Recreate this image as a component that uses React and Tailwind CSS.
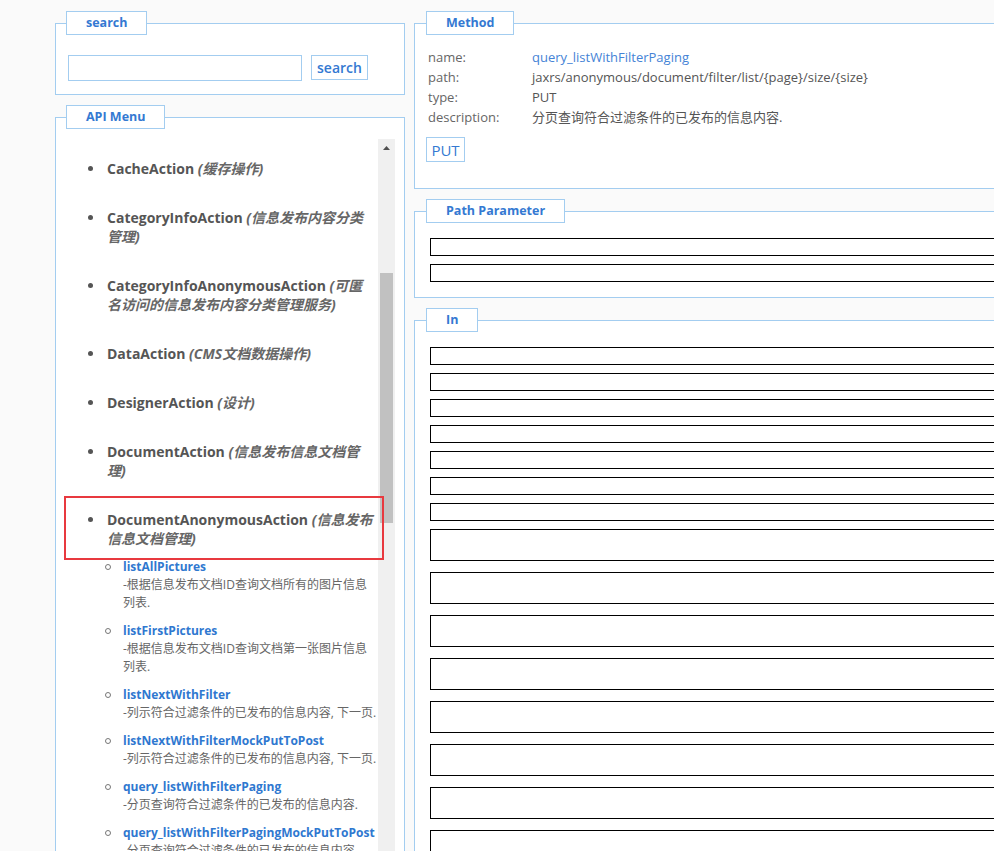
import React from 'react';

const actions = [
  { name: 'CacheAction', desc: '缓存操作' },
  { name: 'CategoryInfoAction', desc: '信息发布内容分类管理' },
  { name: 'CategoryInfoAnonymousAction', desc: '可匿名访问的信息发布内容分类管理服务' },
  { name: 'DataAction', desc: 'CMS文档数据操作' },
  { name: 'DesignerAction', desc: '设计' },
  { name: 'DocumentAction', desc: '信息发布信息文档管理' },
  {
    name: 'DocumentAnonymousAction',
    desc: '信息发布信息文档管理',
    methods: [
      { name: 'listAllPictures', desc: '-根据信息发布文档ID查询文档所有的图片信息列表.' },
      { name: 'listFirstPictures', desc: '-根据信息发布文档ID查询文档第一张图片信息列表.' },
      { name: 'listNextWithFilter', desc: '-列示符合过滤条件的已发布的信息内容, 下一页.' },
      { name: 'listNextWithFilterMockPutToPost', desc: '-列示符合过滤条件的已发布的信息内容, 下一页.' },
      { name: 'query_listWithFilterPaging', desc: '-分页查询符合过滤条件的已发布的信息内容.' },
      { name: 'query_listWithFilterPagingMockPutToPost', desc: '-分页查询符合过滤条件的已发布的信息内容.' },
    ],
  },
];

const methodInfo = [
  { label: 'name:', value: 'query_listWithFilterPaging', link: true },
  { label: 'path:', value: 'jaxrs/anonymous/document/filter/list/{page}/size/{size}' },
  { label: 'type:', value: 'PUT' },
  { label: 'description:', value: '分页查询符合过滤条件的已发布的信息内容.' },
];

const Legend = ({ children, ml = 'ml-[10px]' }) => (
  <legend className={`${ml} h-[24px] border border-[#a3cdf0] bg-white px-[19px] text-[12.5px] font-bold leading-[22px] text-[#3479d2]`}>
    {children}
  </legend>
);

const Box = ({ tall }) => (
  <div className={`border border-black ${tall ? 'h-[32px] mb-[11px]' : 'h-[18px] mb-[8px]'}`}></div>
);

const App = () => {
  return (
    <div
      className="h-[851px] w-[994px] overflow-hidden bg-[#fafafa]"
      style={{ fontFamily: '"Open Sans", "Noto Sans CJK SC", sans-serif' }}
    >
      <div className="flex items-start gap-[9px] pl-[55px] pt-[11px]">
        {/* left column */}
        <div className="flex w-[350px] min-w-0 shrink-0 flex-col gap-[10px]">
          <fieldset className="min-w-0 border border-[#a3cdf0] bg-white">
            <Legend>search</Legend>
            <div className="flex items-start gap-[9px] pl-[12px] pt-[20px] pb-[13px]">
              <input className="h-[26px] w-[234px] border border-[#a3cdf0] bg-white outline-none" />
              <button className="h-[25px] w-[57px] border border-[#a3cdf0] bg-white text-[14px] font-semibold leading-[22px] text-[#3479d2]">
                search
              </button>
            </div>
          </fieldset>

          <fieldset className="h-[760px] min-w-0 border border-[#a3cdf0] bg-white">
            <Legend>API Menu</Legend>
            <div className="relative mt-[10px] flex h-[720px] pr-[9px]">
              <div className="w-0 min-w-0 flex-1 overflow-hidden pt-[20px]">
                {actions.map(action => (
                  <div key={action.name} className="mb-[30px]">
                    <div className="flex pr-[4px]">
                      <div className="flex h-[19px] w-[51px] shrink-0 items-center justify-end pr-[14px]">
                        <span className="h-[5px] w-[5px] rounded-full bg-[#555]"></span>
                      </div>
                      <p className="min-w-0 text-[14px] font-bold leading-[19px] text-[#555]">
                        {action.name} <i className="text-[#666]">({action.desc})</i>
                      </p>
                    </div>
                    {action.methods && (
                      <div className="mt-[10px] flex flex-col gap-[10px]">
                        {action.methods.map(m => (
                          <div key={m.name} className="flex">
                            <div className="flex h-[18px] w-[67px] shrink-0 items-center justify-end pr-[12px]">
                              <span className="h-[6px] w-[6px] rounded-full border border-[#777]"></span>
                            </div>
                            <div className="min-w-0">
                              <p className="whitespace-nowrap text-[12px] font-bold leading-[18px] text-[#2f78d0]">{m.name}</p>
                              <p className="text-[12px] leading-[18px] text-[#666]">{m.desc}</p>
                            </div>
                          </div>
                        ))}
                      </div>
                    )}
                  </div>
                ))}
              </div>

              {/* scrollbar */}
              <div className="flex w-[17px] shrink-0 flex-col bg-[#f0f0f0]">
                <div className="flex h-[17px] items-center justify-center">
                  <svg width="7" height="4" viewBox="0 0 7 4">
                    <path d="M0 4 L3.5 0 L7 4 Z" fill="#505050" />
                  </svg>
                </div>
                <div className="mx-[2px] mt-[117px] h-[250px] bg-[#c1c1c1]"></div>
              </div>

              {/* highlight */}
              <div className="absolute left-[8px] top-[357px] h-[64px] w-[320px] border-2 border-[#e8393f]"></div>
            </div>
          </fieldset>
        </div>

        {/* right column */}
        <div className="flex w-[640px] shrink-0 flex-col gap-[10px]">
          <fieldset className="min-w-0 border border-[#a3cdf0] bg-white">
            <Legend ml="ml-[11px]">Method</Legend>
            <div className="pl-[13px] pt-[12px] pb-[26px]">
              {methodInfo.map(row => (
                <div key={row.label} className="flex text-[13px] leading-[20px]">
                  <span className="w-[104px] shrink-0 text-[#666]">{row.label}</span>
                  <span className={row.link ? 'text-[#4583d6]' : 'text-[#555]'}>{row.value}</span>
                </div>
              ))}
              <button className="-ml-[2px] mt-[10px] h-[25px] w-[39px] border border-[#a3cdf0] bg-white text-[15px] leading-[22px] text-[#3479d2]">
                PUT
              </button>
            </div>
          </fieldset>

          <fieldset className="min-w-0 border border-[#a3cdf0] bg-white">
            <Legend ml="ml-[11px]">Path Parameter</Legend>
            <div className="pl-[15px] pt-[15px] pb-[7px]">
              <Box />
              <Box />
            </div>
          </fieldset>

          <fieldset className="h-[600px] min-w-0 border border-[#a3cdf0] bg-white">
            <Legend ml="ml-[11px]">In</Legend>
            <div className="pl-[15px] pt-[15px]">
              {[0, 1, 2, 3, 4, 5, 6].map(i => <Box key={i} />)}
              {[0, 1, 2, 3, 4, 5, 6, 7].map(i => <Box key={'t' + i} tall />)}
            </div>
          </fieldset>
        </div>
      </div>
    </div>
  );
};

export default App;
